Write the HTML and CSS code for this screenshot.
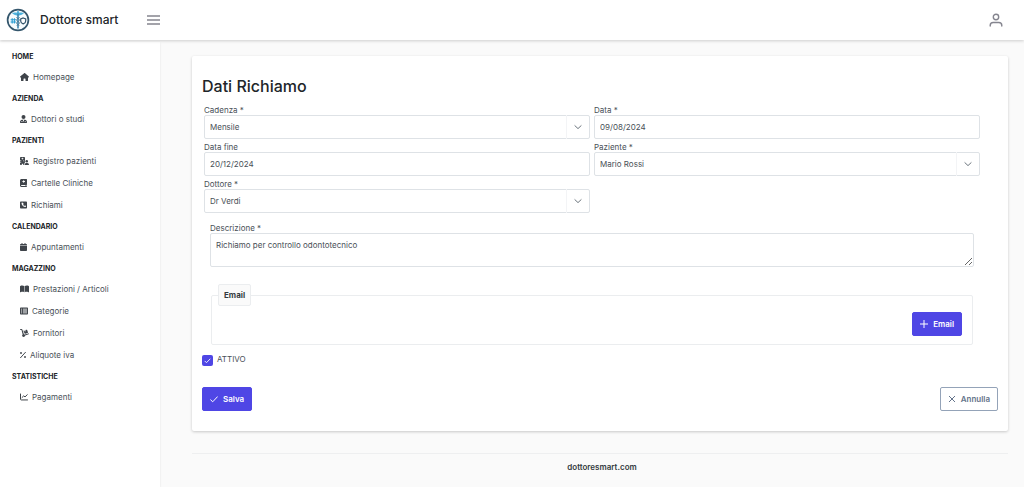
FILE: index.html
```html
<!DOCTYPE html>
<html lang="it">
<head>
<meta charset="utf-8">
<meta name="viewport" content="width=device-width, initial-scale=1">
<title>Dottore smart</title>
<link rel="stylesheet" href="styles.css">
</head>
<body>
<header class="topbar">
  <a class="brand" href="#">
    <svg class="logo" viewBox="0 0 24 24" aria-hidden="true">
      <circle cx="12" cy="12" r="10.4" fill="#f6fbfd" stroke="#34566c" stroke-width="1.700"/>
      <path d="M12 6C10 4 7.600 4.200 6 5.600c1.600.3 2.600 2 6 2.200 3.400-.2 4.400-1.900 6-2.200C16.400 4.200 14 4 12 6z" fill="#4db2dd"/>
      <path d="M12 4v16.500" stroke="#3a85ae" stroke-width="1.600"/>
      <path d="M10.300 9c0 1.500 3.400 1.500 3.400 3s-3.400 1.500-3.400 3 3 1.500 3 3M13.700 9c0 1.500-3.400 1.500-3.400 3s3.400 1.500 3.400 3-3 1.500-3 3" fill="none" stroke="#4b7088" stroke-width=".6"/>
      <circle cx="12" cy="4.200" r="1.200" fill="#4db2dd"/>
      <path d="M6.200 10.200v5.400M8.400 10.200v5.400M4.600 11.800H10M4.600 14H10" stroke="#2b9dd2" stroke-width="1.100"/>
      <path d="M17.200 10l2.500.9v2c0 1.500-1.100 2.400-2.500 3-1.400-.6-2.500-1.500-2.500-3v-2z" fill="#fff" stroke="#31536a" stroke-width="1.200"/>
    </svg>
    <span>Dottore smart</span>
  </a>
  <button class="icon-button" type="button" aria-label="Menu">
    <svg class="menu-icon" viewBox="0 0 13 10" aria-hidden="true"><path d="M0 1h13M0 5h13M0 9h13"/></svg>
  </button>
  <button class="icon-button profile" type="button" aria-label="Profilo">
    <svg class="user-icon" viewBox="0 0 14 14" aria-hidden="true"><circle cx="7" cy="4" r="2.700"/><path d="M1.200 13v-.6c0-1.900 1.300-2.900 3-2.900h5.600c1.700 0 3 1 3 2.900v.6"/></svg>
  </button>
</header>

<div class="layout">
  <nav class="sidebar" aria-label="Navigazione">
    <h2>HOME</h2>
    <ul>
      <li><a href="#"><svg viewBox="0 0 576 512"><path d="M575.800 255.500c0 18-15 32.100-32 32.100h-32l.7 184.400c0 22.100-17.900 40-40 40H392c-22.100 0-40-17.900-40-40V384c0-17.700-14.300-32-32-32H256c-17.700 0-32 14.300-32 32v88c0 22.100-17.900 40-40 40H104c-22.100 0-40-17.900-40-40V287.600H32c-18 0-32-14-32-32.100c0-9 3-17 10-24L266.400 8c7-7 15-8 22-8s15 2 21 7L564.800 231.500c8 7 12 15 11 24z"/></svg>Homepage</a></li>
    </ul>
    <h2>AZIENDA</h2>
    <ul>
      <li><a href="#"><svg viewBox="0 0 448 512"><circle cx="224" cy="128" r="128"/><path fill-rule="evenodd" d="M130 300h188c72 10 130 68 130 148v32c0 18-14 32-32 32H32c-18 0-32-14-32-32v-32c0-80 58-138 130-148zM185 320l39 130 39-130zM96 390h56v56H96zM310 390h40v60h-40z"/></svg>Dottori o studi</a></li>
    </ul>
    <h2>PAZIENTI</h2>
    <ul>
      <li><a href="#"><svg viewBox="0 0 576 512"><path fill-rule="evenodd" d="M48 0h224c26 0 48 22 48 48v230c-25 30-20 65 0 90-40 30-64 70-64 120 0 9 2 17 6 24H208v-80h-96v80H48c-26 0-48-22-48-48V368h80v-40H0v-60h80v-40H0V48C0 22 22 0 48 0zM136 50v36h-36v42h36v36h42v-36h36V86h-36V50zM208 228v40h60v-40z"/><circle cx="432" cy="272" r="80"/><path d="M394 376h78c58 0 104 46 104 104 0 18-14 32-32 32H320c-18 0-32-14-32-32 0-58 46-104 106-104z"/></svg>Registro pazienti</a></li>
      <li><a href="#"><svg viewBox="0 0 448 512"><path fill-rule="evenodd" d="M96 0h320c18 0 32 14 32 32v320c0 18-14 32-32 32v64c18 0 32 14 32 32s-14 32-32 32H96c-53 0-96-43-96-96V96C0 43 43 0 96 0zm0 384c-42 0-42 64 0 64h256v-64zM208 80v52h-52v56h52v52h56v-52h52v-56h-52V80z"/></svg>Cartelle Cliniche</a></li>
      <li><a href="#"><svg viewBox="0 0 448 512"><path fill-rule="evenodd" d="M64 32h320c35 0 64 29 64 64v320c0 35-29 64-64 64H64c-35 0-64-29-64-64V96c0-35 29-64 64-64zm90 66l-44 12c-9 2-14 10-14 18 0 141 115 256 256 256 8 0 16-5 18-14l12-44c2-9-2-18-11-22l-48-20c-8-3-16-1-22 5l-20 25c-36-17-64-46-82-82l25-20c6-6 8-14 5-22l-20-48c-4-9-13-13-22-11z"/></svg>Richiami</a></li>
    </ul>
    <h2>CALENDARIO</h2>
    <ul>
      <li><a href="#"><svg viewBox="0 0 448 512"><path d="M96 32c0-42 64-42 64 0v32h128V32c0-42 64-42 64 0v32h48c26 0 48 22 48 48v48H0v-48c0-26 22-48 48-48h48zM0 192h448v272c0 26-22 48-48 48H48c-26 0-48-22-48-48z"/></svg>Appuntamenti</a></li>
    </ul>
    <h2>MAGAZZINO</h2>
    <ul>
      <li><a href="#"><svg viewBox="0 0 576 512"><path d="M272 70v394c-70-34-150-32-240 0-16 6-32-4-32-22V92c0-12 7-22 18-27C100 24 190 24 272 70zM304 70c82-46 172-46 254-5 11 5 18 15 18 27v350c0 18-16 28-32 22-90-32-170-34-240 0z"/></svg>Prestazioni / Articoli</a></li>
      <li><a href="#"><svg viewBox="0 0 512 512"><path fill-rule="evenodd" d="M64 32h384c35 0 64 29 64 64v320c0 35-29 64-64 64H64c-35 0-64-29-64-64V96c0-35 29-64 64-64zM60 106v60h75v-60zM190 106v60h262v-60zM60 226v60h75v-60zM190 226v60h262v-60zM60 346v60h75v-60zM190 346v60h262v-60z"/></svg>Categorie</a></li>
      <li><a href="#"><svg viewBox="0 0 576 512"><path d="M0 32C0 14 14 0 32 0h56c30 0 57 19 67 48l96 280c22 3 42 13 57 29l230-77c38-12 50 48 20 60l-230 77c0 53-42 95-96 95-92 0-128-112-62-164L95 69c-1-3-4-5-7-5H32C14 64 0 50 0 32z"/><path d="M212 112l70-24 26 78 60-20-26-78 75-25c17-6 35 4 41 20l50 150c6 17-4 35-20 41l-150 50c-17 6-35-4-41-20z"/></svg>Fornitori</a></li>
      <li><a href="#"><svg viewBox="0 0 384 512"><path d="M350 82L34 430" fill="none" stroke="currentColor" stroke-width="62" stroke-linecap="round"/><circle cx="64" cy="128" r="60"/><circle cx="320" cy="384" r="60"/></svg>Aliquote iva</a></li>
    </ul>
    <h2>STATISTICHE</h2>
    <ul>
      <li><a href="#"><svg viewBox="0 0 512 512"><path d="M32 64v336c0 26 18 44 44 44h404M128 290l112-110 80 70 144-140" fill="none" stroke="currentColor" stroke-width="64" stroke-linecap="round" stroke-linejoin="round"/></svg>Pagamenti</a></li>
    </ul>
  </nav>

  <div class="content">
    <main class="card">
      <h1>Dati Richiamo</h1>
      <form>
        <div class="fields">
          <div class="field">
            <label for="cadenza">Cadenza *</label>
            <div class="select">
              <select id="cadenza"><option>Mensile</option></select>
              <svg class="chevron" viewBox="0 0 8 8" aria-hidden="true"><path d="M.6 2.400L4 5.600l3.400-3.200"/></svg>
            </div>
          </div>
          <div class="field">
            <label for="data">Data *</label>
            <input id="data" type="text" value="09/08/2024">
          </div>
          <div class="field">
            <label for="fine">Data fine</label>
            <input id="fine" type="text" value="20/12/2024">
          </div>
          <div class="field">
            <label for="paziente">Paziente *</label>
            <div class="select">
              <select id="paziente"><option>Mario Rossi</option></select>
              <svg class="chevron" viewBox="0 0 8 8" aria-hidden="true"><path d="M.6 2.400L4 5.600l3.400-3.200"/></svg>
            </div>
          </div>
          <div class="field">
            <label for="dottore">Dottore *</label>
            <div class="select">
              <select id="dottore"><option>Dr Verdi</option></select>
              <svg class="chevron" viewBox="0 0 8 8" aria-hidden="true"><path d="M.6 2.400L4 5.600l3.400-3.200"/></svg>
            </div>
          </div>
        </div>
        <div class="field description">
          <label for="descrizione">Descrizione *</label>
          <textarea id="descrizione">Richiamo per controllo odontotecnico</textarea>
        </div>
        <fieldset>
          <legend>Email</legend>
          <button class="button primary" type="button"><svg viewBox="0 0 8 8" aria-hidden="true"><path d="M4 0v8M0 4h8"/></svg>Email</button>
        </fieldset>
        <div class="check">
          <span class="check-box">
            <input id="attivo" type="checkbox" checked>
            <svg viewBox="0 0 8 8" aria-hidden="true"><path d="M.8 4.500l2 2L7.200 2"/></svg>
          </span>
          <label for="attivo">ATTIVO</label>
        </div>
        <div class="actions">
          <button class="button primary" type="submit"><svg viewBox="0 0 8 8" aria-hidden="true"><path d="M.4 4.600l2.300 2.200L7.700 1.500"/></svg>Salva</button>
          <button class="button outline" type="button"><svg viewBox="0 0 8 8" aria-hidden="true"><path d="M1 1l6 6M7 1L1 7"/></svg>Annulla</button>
        </div>
      </form>
    </main>
    <footer>dottoresmart.com</footer>
  </div>
</div>
</body>
</html>
```
FILE: styles.css
```css
* { box-sizing: border-box; }

body {
  margin: 0;
  min-height: 100vh;
  display: flex;
  flex-direction: column;
  background: #fafafa;
  color: #495057;
  font: 8px/12px Inter, "Liberation Sans", sans-serif;
}

input, select, textarea, button { font: inherit; color: inherit; }
svg { display: block; flex: none; }

/* Top bar */
.topbar {
  position: relative;
  display: flex;
  align-items: center;
  height: 40px;
  padding: 0 21px 0 6px;
  background: #fff;
  box-shadow: 0 1px 3px rgba(0, 0, 0, .18);
}
.brand {
  display: flex;
  align-items: center;
  gap: 10px;
  width: 134px;
  color: #212529;
  font-size: 12px;
  font-weight: 500;
  line-height: 16px;
  text-decoration: none;
  white-space: nowrap;
}
.logo { width: 24px; height: 24px; }
.icon-button {
  padding: 0;
  border: 0;
  background: none;
  color: #85858f;
  cursor: pointer;
  margin-left: 7px;
}
.icon-button svg { fill: none; stroke: currentColor; }
.menu-icon { width: 13px; height: 10px; stroke-width: 1.3; }
.user-icon { width: 14px; height: 14px; stroke-width: 1.4; stroke-linecap: round; }
.profile { margin-left: auto; }

.layout { display: flex; flex: 1; }

/* Sidebar */
.sidebar {
  flex: none;
  width: 160px;
  margin-top: 2px;
  padding: 4px 12px;
  background: #fff;
  box-shadow: 0 1px 2px rgba(0, 0, 0, .1);
}
.sidebar h2 {
  margin: 0;
  padding-top: 2px;
  color: #212529;
  font-size: 7px;
  font-weight: 700;
  line-height: 18px;
}
.sidebar ul { margin: 0; padding: 0; list-style: none; }
.sidebar a {
  display: flex;
  align-items: center;
  gap: 4px;
  height: 22px;
  padding-left: 8px;
  color: #495057;
  text-decoration: none;
}
.sidebar svg { height: 8px; width: auto; fill: currentColor; color: #3f444a; }

/* Main card */
.content { flex: 1; min-width: 0; padding: 16px 16px 0 32px; }
.card {
  padding: 20px 10px;
  background: #fff;
  border-radius: 2px;
  box-shadow: 0 1px 3px rgba(0, 0, 0, .2);
}
.card h1 {
  margin: 0 0 8px;
  color: #212529;
  font-size: 16px;
  font-weight: 500;
  line-height: 20px;
}
.fields {
  display: grid;
  grid-template-columns: 1fr 1fr;
  column-gap: 4px;
  padding: 0 18px 0 2px;
}
.field {
  display: flex;
  flex-direction: column;
  padding: 2px 0;
}
.field > label { line-height: 9px; }
.field input, .field select, .field textarea {
  width: 100%;
  margin: 0;
  padding: 0 5px;
  border: 1px solid #dee2e6;
  border-radius: 2px;
  background: #fff;
  outline: none;
}
.field input, .field select { height: 24px; }
.select { display: grid; grid-template-columns: 1fr 24px; }
.select select { grid-area: 1 / 1 / 2 / 3; appearance: none; }
.chevron {
  grid-area: 1 / 2;
  width: 24px;
  height: 24px;
  padding: 8px 8px 8px 7px;
  border-left: 1px solid #f3f4f6;
  fill: none;
  stroke: #6c757d;
  pointer-events: none;
}
.field.description { padding: 9px 24px 2px 8px; }
.field.description textarea {
  display: block;
  height: 34px;
  padding: 5px;
}

fieldset {
  display: flex;
  justify-content: flex-end;
  margin: 15px 25px 0 9px;
  padding: 6px 10px 8px 6px;
  border: 1px solid #ebedef;
  border-radius: 2px;
}
legend {
  padding: 4px 5px;
  border: 1px solid #ebedef;
  border-radius: 2px;
  background: #fafafa;
  color: #343a40;
  font-weight: 700;
}

.check { display: flex; gap: 4px; margin-top: 8px; }
.check-box { display: grid; margin-top: 2px; }
.check-box input, .check-box svg { grid-area: 1 / 1; width: 11px; height: 11px; }
.check-box input {
  margin: 0;
  appearance: none;
  border-radius: 2px;
  background: #4f46e5;
}
.check-box svg { padding: 2px; fill: none; stroke: #fff; pointer-events: none; }

.actions { display: flex; justify-content: space-between; margin-top: 21px; }
.button {
  display: flex;
  align-items: center;
  gap: 5px;
  height: 24px;
  padding: 0 7px;
  border: 1px solid #4f46e5;
  border-radius: 2px;
  font-weight: 600;
  cursor: pointer;
}
.button svg { width: 8px; height: 8px; fill: none; stroke: currentColor; }
.primary { background: #4f46e5; color: #fff; }
.outline { border-color: #94a3b8; background: #fff; color: #64748b; }

footer {
  margin-top: 22px;
  padding: 7px 0 8px 4px;
  border-top: 1px solid #eeeff0;
  color: #343a40;
  font-weight: 600;
  text-align: center;
}
```
